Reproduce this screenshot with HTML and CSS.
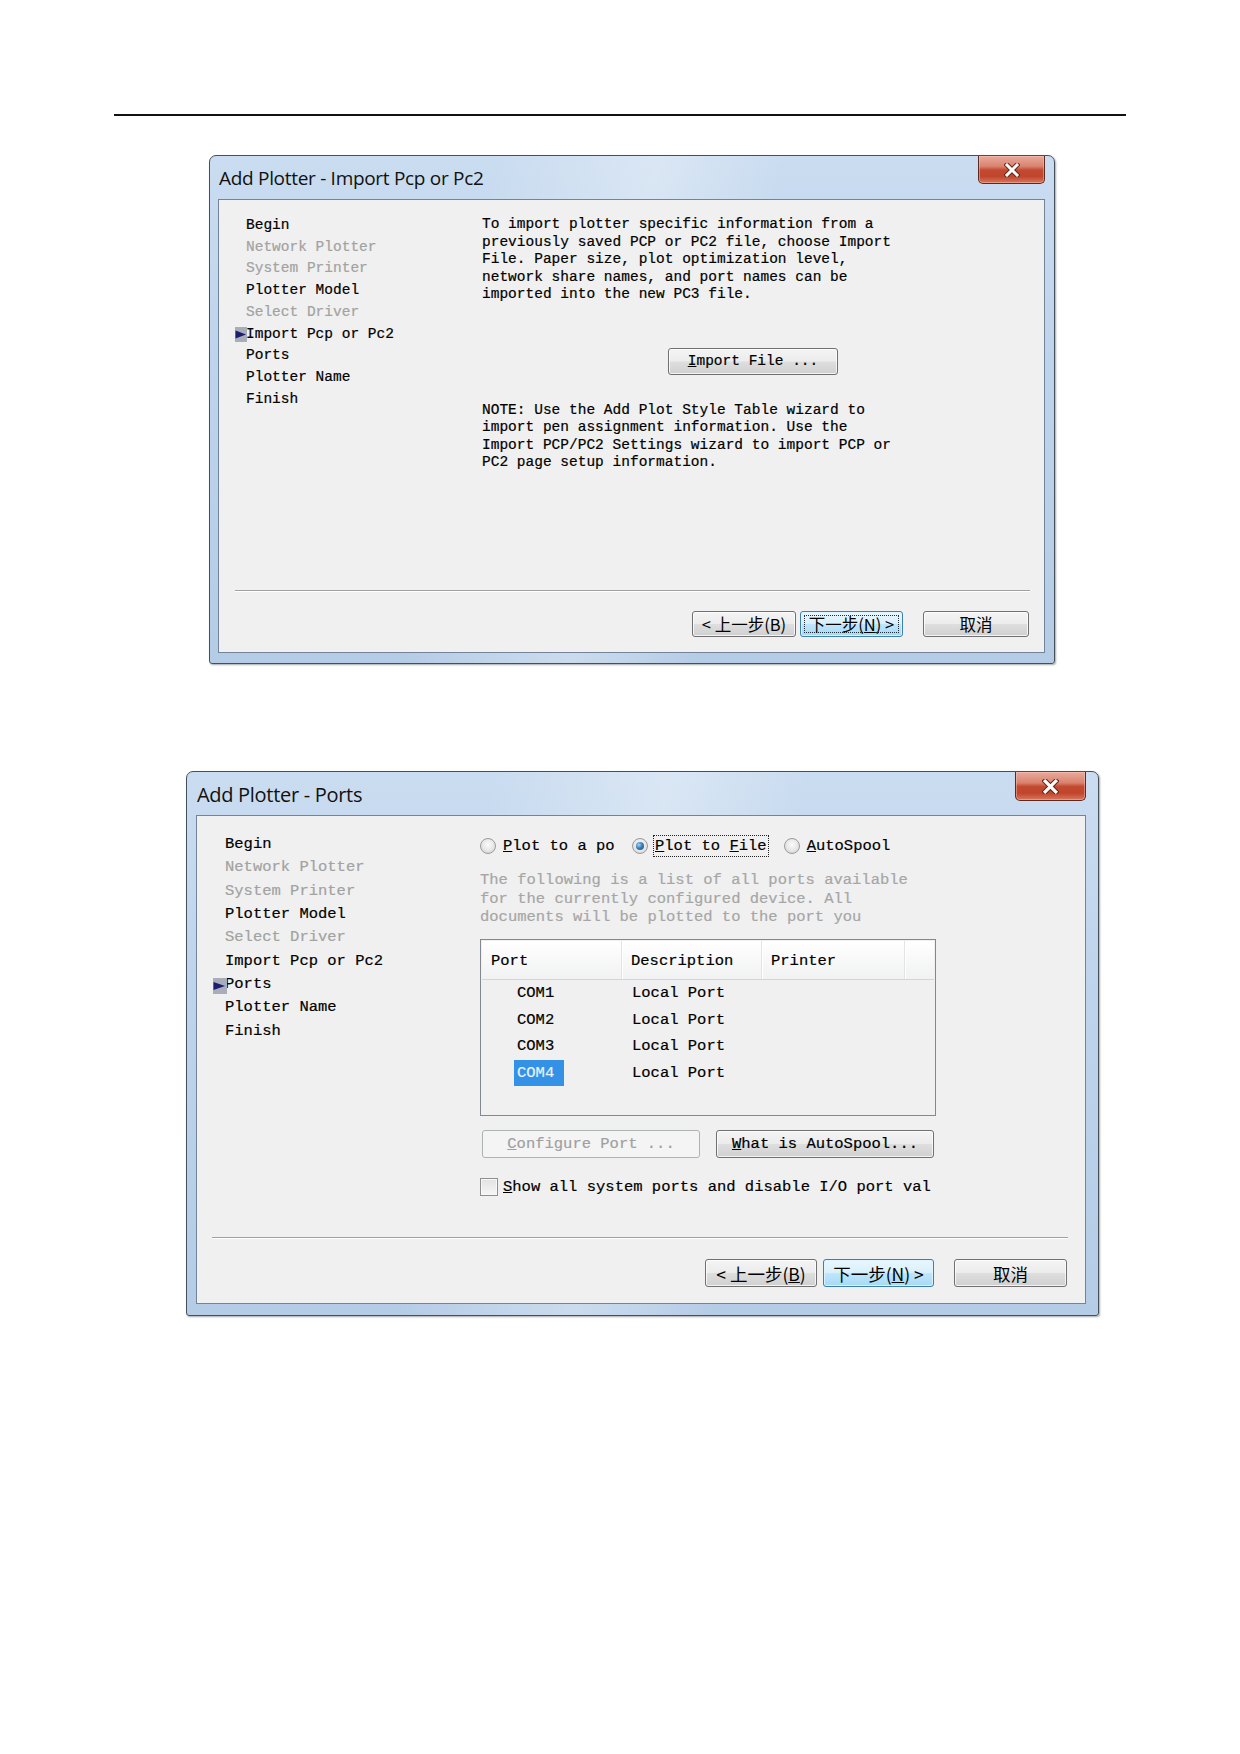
FILE: index.html
```html
<!DOCTYPE html>
<html>
<head>
<meta charset="utf-8">
<link rel="stylesheet" href="styles.css">
</head>
<body>
<div class="page">
  <div class="rule"></div>

  <div class="dialog d1">
    <div class="titlebar">
      <span class="title">Add Plotter - Import Pcp or Pc2</span>
      <div class="close"><svg width="16" height="14" viewBox="0 0 16 14"><path d="M3 2 L13 12 M13 2 L3 12" stroke="#6b2418" stroke-width="5" stroke-linecap="square"/><path d="M3 2 L13 12 M13 2 L3 12" stroke="#ffffff" stroke-width="3" stroke-linecap="square"/></svg></div>
    </div>
    <div class="panel">
      <div class="wbody">
        <ul class="steps">
          <li>Begin</li>
          <li class="dim">Network Plotter</li>
          <li class="dim">System Printer</li>
          <li>Plotter Model</li>
          <li class="dim">Select Driver</li>
          <li class="cur"><svg class="marker" width="12" height="15" viewBox="0 0 12 15"><rect x="0" y="0" width="12" height="15" fill="#a8adb9"/><polygon points="0.5,3.5 11,7.5 0.5,11.5" fill="#1b1d6e"/></svg>Import Pcp or Pc2</li>
          <li>Ports</li>
          <li>Plotter Name</li>
          <li>Finish</li>
        </ul>
        <div class="right">
          <p class="info">To import plotter specific information from a<br>previously saved PCP or PC2 file, choose Import<br>File. Paper size, plot optimization level,<br>network share names, and port names can be<br>imported into the new PC3 file.</p>
          <div class="import-row"><div class="btn import"><span><u>I</u>mport File ...</span></div></div>
          <p class="info note">NOTE: Use the Add Plot Style Table wizard to<br>import pen assignment information. Use the<br>Import PCP/PC2 Settings wizard to import PCP or<br>PC2 page setup information.</p>
        </div>
      </div>
      <div class="footer">
        <div class="sep"></div>
        <div class="btnrow">
          <div class="btn cjk back">&lt; 上一步(B)</div>
          <div class="btn cjk next"><span class="focus">下一步(<u>N</u>) &gt;</span></div>
          <div class="btn cjk cancel">取消</div>
        </div>
      </div>
    </div>
  </div>

  <div class="dialog d2">
    <div class="titlebar">
      <span class="title">Add Plotter - Ports</span>
      <div class="close"><svg width="17" height="15" viewBox="0 0 16 14"><path d="M3 2 L13 12 M13 2 L3 12" stroke="#6b2418" stroke-width="5" stroke-linecap="square"/><path d="M3 2 L13 12 M13 2 L3 12" stroke="#ffffff" stroke-width="3" stroke-linecap="square"/></svg></div>
    </div>
    <div class="panel">
      <div class="wbody">
        <ul class="steps">
          <li>Begin</li>
          <li class="dim">Network Plotter</li>
          <li class="dim">System Printer</li>
          <li>Plotter Model</li>
          <li class="dim">Select Driver</li>
          <li>Import Pcp or Pc2</li>
          <li class="cur"><svg class="marker" width="14" height="16" viewBox="0 0 14 16"><rect x="0" y="0" width="14" height="16" fill="#a8adb9"/><polygon points="0.5,4 12,8 0.5,12" fill="#1b1d6e"/></svg>Ports</li>
          <li>Plotter Name</li>
          <li>Finish</li>
        </ul>
        <div class="right">
          <div class="radios">
            <span class="radio"></span><span class="rlabel r1l"><u>P</u>lot to a po</span>
            <span class="radio on r2"></span><span class="rlabel focusr"><u>P</u>lot to <u>F</u>ile</span>
            <span class="radio r3"></span><span class="rlabel"><u>A</u>utoSpool</span>
          </div>
          <p class="grey">The following is a list of all ports available<br>for the currently configured device. All<br>documents will be plotted to the port you</p>
          <div class="listbox">
            <div class="lhead">
              <div class="hc c1">Port</div>
              <div class="hc c2">Description</div>
              <div class="hc c3">Printer</div>
              <div class="hc c4"></div>
            </div>
            <div class="lrow"><div class="cc c1"><span class="item">COM1</span></div><div class="cc c2">Local Port</div></div>
            <div class="lrow"><div class="cc c1"><span class="item">COM2</span></div><div class="cc c2">Local Port</div></div>
            <div class="lrow"><div class="cc c1"><span class="item">COM3</span></div><div class="cc c2">Local Port</div></div>
            <div class="lrow"><div class="cc c1"><span class="item sel">COM4</span></div><div class="cc c2">Local Port</div></div>
          </div>
          <div class="btns2">
            <div class="btn disabled cfg"><span><u>C</u>onfigure Port ...</span></div>
            <div class="btn what"><span><u>W</u>hat is AutoSpool...</span></div>
          </div>
          <div class="check">
            <span class="box"></span><span class="clabel"><u>S</u>how all system ports and disable I/O port val</span>
          </div>
        </div>
      </div>
      <div class="footer">
        <div class="sep"></div>
        <div class="btnrow">
          <div class="btn cjk back">&lt; 上一步(<u>B</u>)</div>
          <div class="btn cjk next">下一步(<u>N</u>) &gt;</div>
          <div class="btn cjk cancel">取消</div>
        </div>
      </div>
    </div>
  </div>
</div>
</body>
</html>
```
FILE: styles.css
```css
* { box-sizing: border-box; }
body { margin: 0; background: #ffffff; }
.page { width: 1240px; height: 1754px; padding-top: 114px; overflow: hidden; }
.rule { margin-left: 114px; width: 1012px; height: 2px; background: #111111; }

.dialog {
  display: flex;
  flex-direction: column;
  border: 1px solid #46505b;
  border-radius: 7px 7px 3px 3px;
  background:
    linear-gradient(100deg, rgba(255,255,255,0) 30%, rgba(255,255,255,0.3) 48%, rgba(255,255,255,0) 62%),
    linear-gradient(180deg, #cadcf0 0%, #bed4ec 40%, #b5cce6 100%);
  box-shadow: 1px 1px 2px rgba(0,0,0,0.35);
}
.d1 { margin: 39px 0 0 209px; width: 846px; height: 509px; padding: 0 9px 10px 8px; }
.d2 { margin: 107px 0 0 186px; width: 913px; height: 545px; padding: 0 12px 11px 9px; }

.titlebar { height: 43px; display: flex; align-items: flex-start; }
.title {
  align-self: center;
  margin-left: 1px;
  margin-top: 0;
  font-family: "Open Sans", "Noto Sans", sans-serif;
  font-size: 19px;
  letter-spacing: -0.3px;
  color: #111111;
}
.d2 .title { font-size: 20px; margin-top: 2px; }
.close {
  margin-left: auto;
  width: 67px;
  height: 28px;
  border: 1px solid #5d2a22;
  border-top: 0;
  border-radius: 0 0 5px 5px;
  background: linear-gradient(180deg, #e9aa9b 0%, #da8370 38%, #c24a30 52%, #c0452c 75%, #d6775e 100%);
  box-shadow: inset 0 0 0 1px rgba(255,200,190,0.45);
  display: flex;
  align-items: center;
  justify-content: center;
}
.d2 .close { width: 71px; height: 29px; }

.panel {
  flex: 1;
  display: flex;
  flex-direction: column;
  border: 1px solid #72849a;
  background: #f0f0f0;
  font-family: "Liberation Mono", "DejaVu Sans Mono", monospace;
  color: #000000;
  -webkit-text-stroke: 0.2px currentColor;
}
.d1 .panel { font-size: 14.5px; }
.d2 .panel { font-size: 15.5px; }

.wbody { flex: 1; display: grid; align-content: start; }
.d1 .wbody { grid-template-columns: 236px 1fr; padding: 15px 0 0 27px; }
.d2 .wbody { grid-template-columns: 255px 1fr; padding: 17px 0 0 28px; }

.steps { list-style: none; margin: 0; padding: 0; white-space: nowrap; }
.d1 .steps li { line-height: 21.7px; }
.d2 .steps li { line-height: 23.35px; }
.steps .dim { color: #a2a2a2; }
.steps .cur { position: relative; }
.marker { position: absolute; left: -11px; top: 50%; margin-top: -7px; }
.d2 .marker { left: -12px; margin-top: -7px; }

.info { margin: 0; line-height: 17.5px; white-space: nowrap; }
.d1 .right { padding-top: 1px; }
.import-row { margin-top: 44px; padding-left: 186px; }
.note { margin-top: 27px; }

.btn {
  display: flex;
  align-items: center;
  justify-content: center;
  border: 1px solid #707070;
  border-radius: 3px;
  background: linear-gradient(180deg, #f4f4f4 0%, #ececec 48%, #dedede 52%, #d0d0d0 100%);
  box-shadow: inset 0 0 0 1px rgba(255,255,255,0.75);
  color: #000000;
  white-space: nowrap;
}
.import { width: 170px; height: 27px; }
.cjk { font-family: "Noto Sans CJK SC", "Liberation Sans", sans-serif; -webkit-text-stroke: 0; }
.d1 .cjk { font-size: 16.5px; }
.d2 .cjk { font-size: 17.5px; }
.next {
  border-color: #3c7fb1;
  background: linear-gradient(180deg, #eaf6fd 0%, #d9f0fc 48%, #bee6fd 52%, #a7d9f5 100%);
  box-shadow: inset 0 0 0 1px rgba(220,245,255,0.9);
}
.focus {
  flex: 1;
  align-self: stretch;
  margin: 3px;
  border: 1px dotted #1e2a36;
  display: flex;
  align-items: center;
  justify-content: center;
}

.footer { display: flex; flex-direction: column; }
.sep { height: 2px; border-top: 1px solid #a0a0a0; border-bottom: 1px solid #ffffff; }
.d1 .sep { margin: 0 14px 0 16px; }
.d2 .sep { margin: 0 17px 0 15px; }
.btnrow { display: flex; justify-content: flex-end; }
.d1 .btnrow { margin-top: 19px; padding: 0 15px 15px 0; }
.d1 .back { width: 104px; height: 26px; }
.d1 .next { width: 103px; height: 26px; margin-left: 4px; }
.d1 .cancel { width: 106px; height: 26px; margin-left: 20px; }
.d2 .btnrow { margin-top: 20px; padding: 0 18px 16px 0; }
.d2 .back { width: 112px; height: 28px; }
.d2 .next { width: 111px; height: 28px; margin-left: 6px; }
.d2 .cancel { width: 113px; height: 28px; margin-left: 20px; }

/* dialog 2 right column */
.d2 .right { padding-top: 2px; }
.radios { display: flex; align-items: center; height: 22px; white-space: nowrap; }
.radio {
  width: 16px;
  height: 16px;
  flex: none;
  border: 1px solid #9a9a9a;
  border-radius: 50%;
  background: radial-gradient(circle at 50% 40%, #fbfbfb 0%, #e6e6e6 55%, #cfcfcf 100%);
  display: grid;
  place-items: center;
}
.radio.on::after {
  content: "";
  width: 8px;
  height: 8px;
  border-radius: 50%;
  background: radial-gradient(circle at 35% 35%, #a8d4f4 0%, #3d7fb8 45%, #1b4a78 100%);
}
.rlabel { margin-left: 7px; line-height: 20px; }
.r1l { display: inline-block; width: 120px; }
.r2 { margin-left: 9px; }
.focusr { margin-left: 5px; padding: 0 1px; border: 1px dotted #222222; }
.r3 { margin-left: 15px; }

.grey { margin: 14px 0 0; line-height: 18.5px; color: #a6a6a6; white-space: nowrap; }

.listbox {
  margin-top: 12px;
  width: 456px;
  height: 177px;
  border: 1px solid #828790;
  background: #f0f0f0;
  padding: 1px;
}
.lhead {
  display: flex;
  height: 39px;
  background: linear-gradient(180deg, #ffffff 0%, #f7f7f7 60%, #f1f2f3 100%);
  border-bottom: 1px solid #d5d5d5;
}
.hc {
  display: flex;
  align-items: center;
  padding-left: 9px;
  padding-top: 3px;
  border-right: 1px solid #e3e4e6;
  box-shadow: 1px 0 0 #ffffff;
}
.c1 { width: 140px; flex: none; }
.c2 { width: 140px; flex: none; }
.c3 { width: 143px; flex: none; }
.c4 { flex: 1; border-right: 0; box-shadow: none; }
.lrow { display: flex; height: 26.7px; }
.cc { display: flex; align-items: stretch; }
.cc.c1 { padding-left: 32px; }
.cc.c2 { padding-left: 10px; align-items: center; }
.item { display: flex; align-items: center; padding: 0 10px 0 3px; }
.item.sel { background: #3392e6; color: #e8f3ff; }

.btns2 { display: flex; margin-top: 14px; }
.cfg { width: 218px; height: 28px; margin-left: 2px; }
.what { width: 218px; height: 28px; margin-left: 16px; }
.disabled {
  border-color: #adb2b5;
  background: #f4f4f4;
  box-shadow: none;
  color: #a0a0a0;
}

.check { display: flex; align-items: center; margin-top: 19px; height: 20px; white-space: nowrap; }
.box {
  width: 18px;
  height: 18px;
  flex: none;
  border: 1px solid #8e8f8f;
  background: linear-gradient(180deg, #e2e2e2 0%, #f6f6f6 100%);
  box-shadow: inset 0 0 0 1px #f8f8f8;
}
.clabel { margin-left: 5px; }
```
